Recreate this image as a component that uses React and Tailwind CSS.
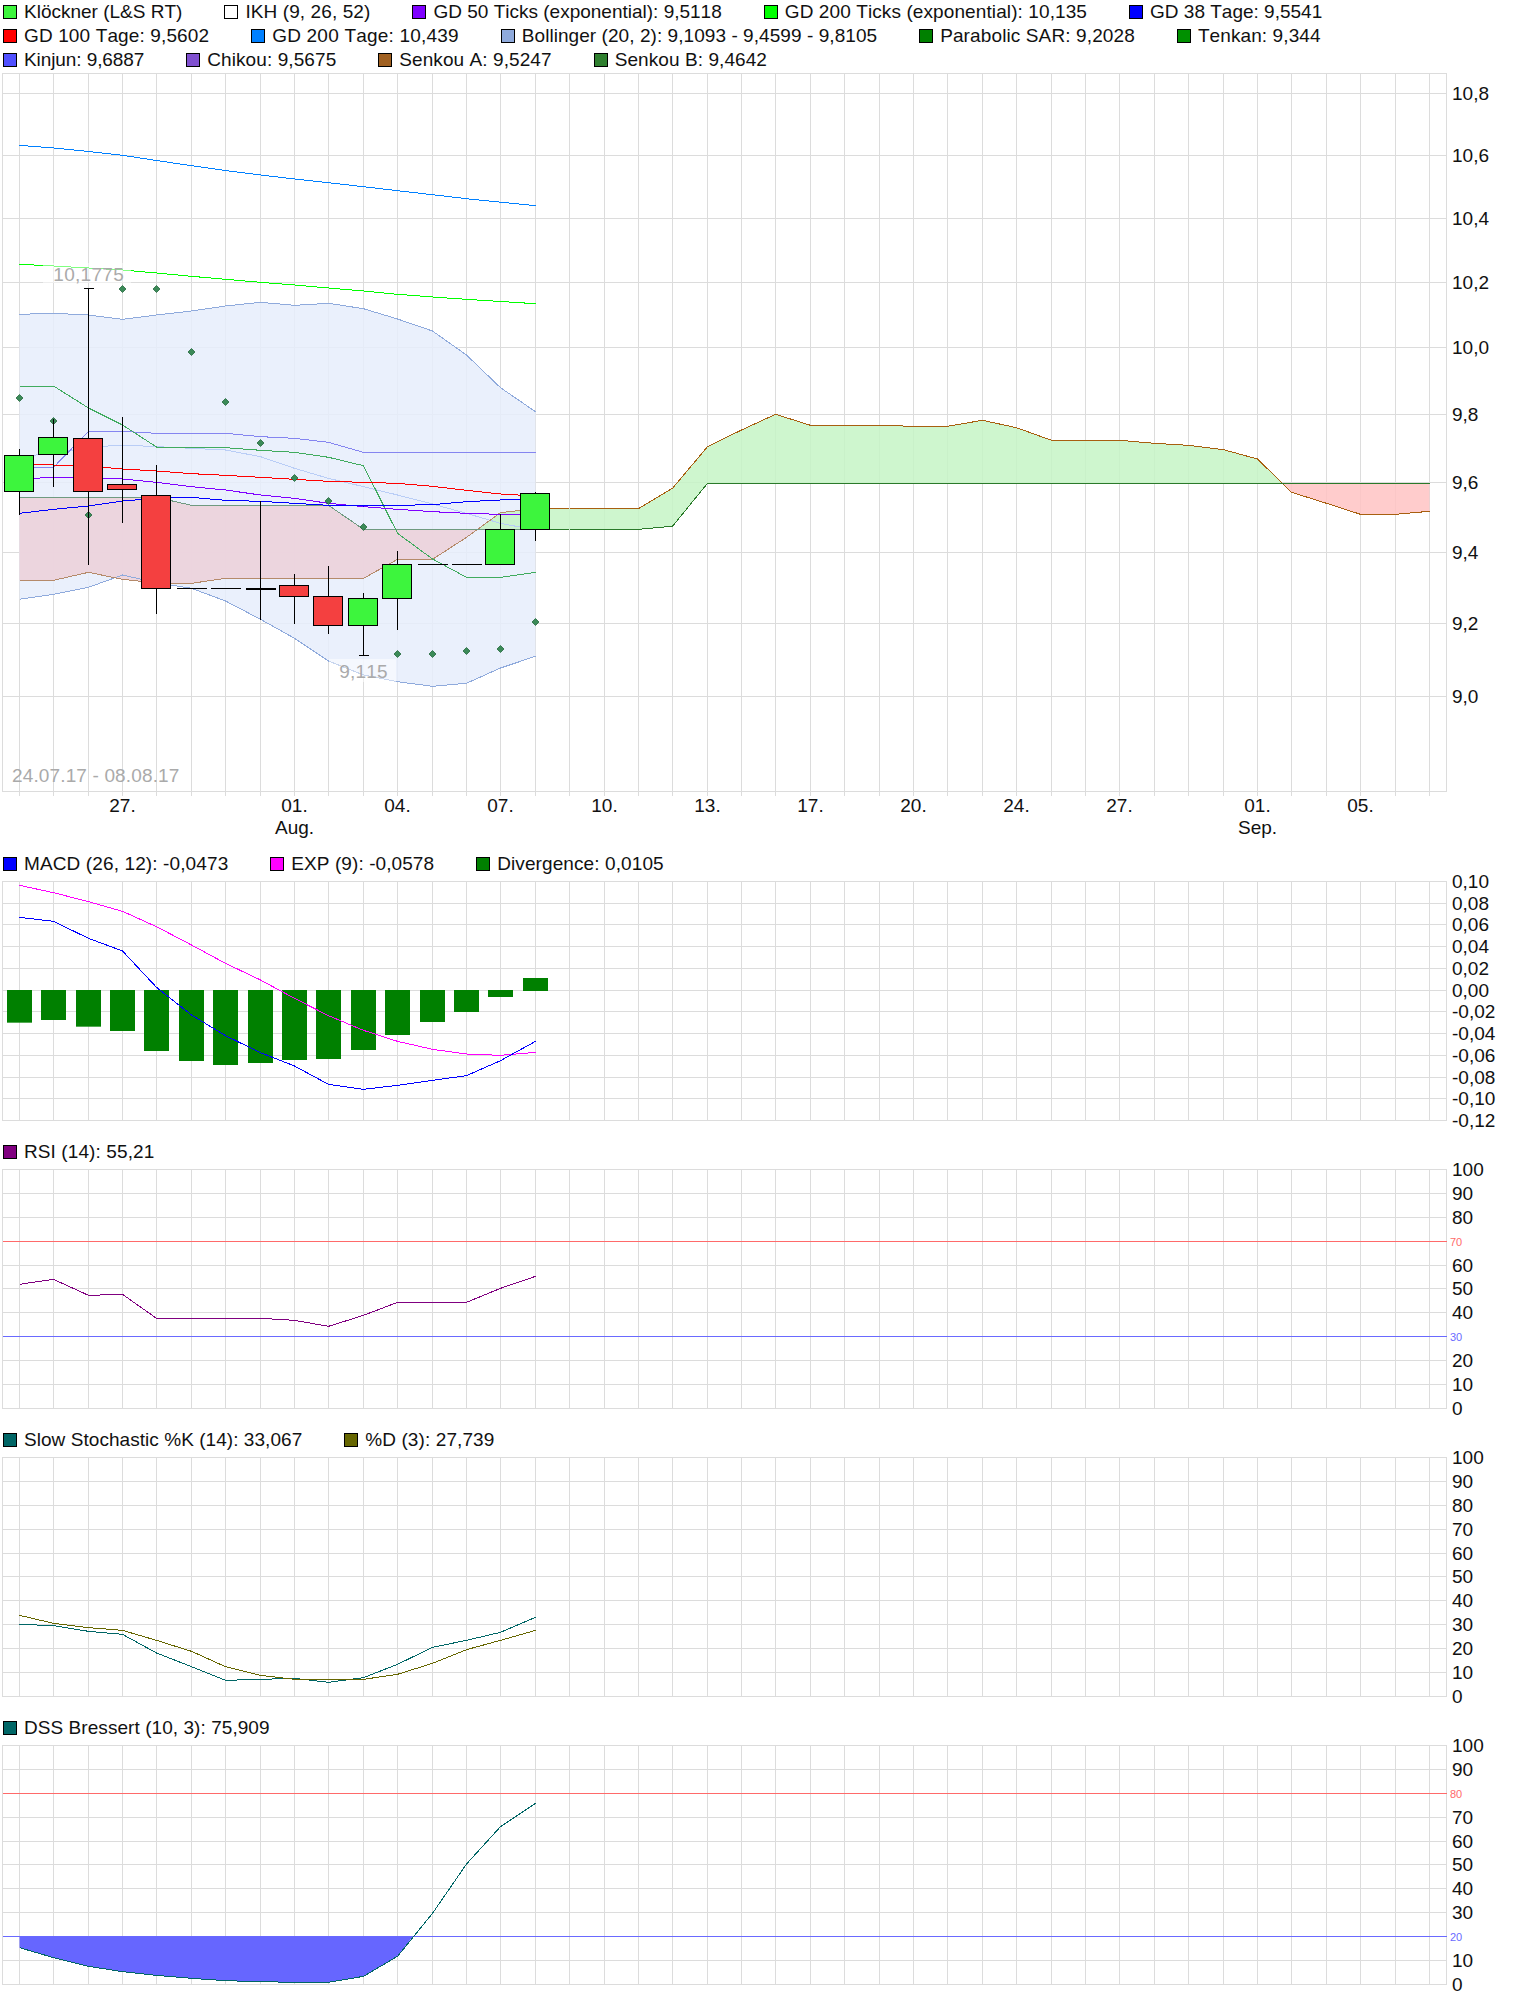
// Ichimoku / indicator chart page, values in page pixels
const LEGEND_TOP = [
  { c: '#3df53d', t: 'Klöckner (L&S RT)' },
  { c: '#ffffff', t: 'IKH (9, 26, 52)', track: 'tracking-[0.1px]' },
  { c: '#7f00ff', t: 'GD 50 Ticks (exponential): 9,5118' },
  { c: '#00ff00', t: 'GD 200 Ticks (exponential): 10,135', track: 'tracking-[0.1px]' },
  { c: '#0000ff', t: 'GD 38 Tage: 9,5541' },
  { c: '#ff0000', t: 'GD 100 Tage: 9,5602', track: 'tracking-[0.13px]' },
  { c: '#0080ff', t: 'GD 200 Tage: 10,439', track: 'tracking-[0.2px]' },
  { c: '#8faadc', t: 'Bollinger (20, 2): 9,1093 - 9,4599 - 9,8105', track: 'tracking-[0.06px]' },
  { c: '#008000', t: 'Parabolic SAR: 9,2028', track: 'tracking-[0.12px]' },
  { c: '#009000', t: 'Tenkan: 9,344', track: 'tracking-[0.1px]' },
  { c: '#5050ff', t: 'Kinjun: 9,6887', track: 'tracking-[-0.09px]' },
  { c: '#8050d0', t: 'Chikou: 9,5675', track: 'tracking-[0.09px]' },
  { c: '#a06020', t: 'Senkou A: 9,5247', track: 'tracking-[0.08px]' },
  { c: '#308030', t: 'Senkou B: 9,4642', track: 'tracking-[0.08px]' },
]

// ── Helpers ─────────────────────────────────────────────
const xAt = i => Math.floor(19.4 + i * 34.39) + 0.5
const X_LINES = Array.from({ length: 42 }, (_, i) => xAt(i))
const LEFT = 2.5
const RIGHT = 1446.5

const my = p => 400 + p / 3 // main chart, lower part
const pts = (ys, start = 0) => ys.map((y, i) => `${xAt(i + start)},${y}`).join(' ')
const area = (top, bottom, start = 0) =>
  [...top.map((y, i) => `${xAt(i + start)},${y}`), ...bottom.map((y, i) => `${xAt(i + start)},${y}`).reverse()].join(' ')

// ── Main chart data ─────────────────────────────────────
const GD200_TAGE = [145.3, 148, 151.5, 155.3, 160.5, 165.7, 170.5, 175, 179, 182.7, 186.7, 190.7, 194.7, 198.7, 202.2, 205.7]
const GD200_TICKS = [264.3, 266, 268, 270, 273, 276.3, 279.3, 282.3, 285, 288, 291, 294.3, 297, 299.3, 301.5, 303.7]
const BOLL_TOP = [314.3, 313.3, 315, 319.3, 315, 311, 306, 302.3, 305.3, 303.3, 308.7, 319, 331, 355, 387.7, 411.7]
const BOLL_BOTTOM = [599.3, 594.3, 587.3, 575, 582.7, 588.3, 601, 619.3, 638.3, 661, 675, 681.7, 686.3, 683.3, 668, 656.3]
const BOLL_MID = [170, 160, 142, 135, 140, 145, 150, 170, 205, 235, 260, 285, 312, 340, 370, 390].map(my)
const KINJUN = [202, 202, 94, 94, 100, 100, 100, 110, 115, 127, 157, 157, 157, 157, 157, 157].map(my)
const TENKAN = [386, 386, 408, 425, 447, 447, 447.7, 450.3, 452.3, 457.3, 465.7, 533.3, 559, 577.3, 577.3, 572.3]
const GD100 = [190, 195, 198, 207, 213, 221, 226, 232, 238, 244, 247, 250, 259, 271, 282, 288].map(my)
const GD50 = [237, 232, 232, 237, 247, 260, 270, 285, 295, 310, 320, 328, 335, 340, 343, 342].map(my)
const GD38 = [340, 328, 318, 303, 295, 292, 301, 304, 310, 316, 318, 316, 314, 305, 300, 297].map(my)

const SENKOU_A_L = [541, 541, 517, 538, 549, 550, 535, 535, 535, 535, 535, 478, 478, 412, 338, 326].map(my)
const SENKOU_B_L = [292, 292, 292, 292, 292, 316, 316, 316, 316, 316, 388, 388, 388, 388, 388, 388].map(my)
const SENKOU_A_R = [508.7, 508.7, 508.7, 488.3, 446.7, 430, 414.3, 425.3, 425.3, 425.3, 426.3, 426.3, 420.3, 427.7, 440.3, 440.3, 440.3, 443.3, 445.3, 449.7, 459, 492.3, 503.3, 514.3, 514.3, 511.3]
const SENKOU_B_R = [529.3, 529.3, 529.3, 526.3, 483.3, 483.3, 483.3, 483.3, 483.3, 483.3, 483.3, 483.3, 483.3, 483.3, 483.3, 483.3, 483.3, 483.3, 483.3, 483.3, 483.3, 483.3, 483.3, 483.3, 483.3, 483.3]

const CROSS1 = 477.7
const CROSS2 = 1283
const KUMO_PINK_L = [...SENKOU_B_L.slice(0, 14).map((y, i) => `${xAt(i)},${y}`), `${CROSS1},${my(388)}`, ...SENKOU_A_L.slice(0, 14).map((y, i) => `${xAt(i)},${y}`).reverse()].join(' ')
const KUMO_GREEN = [
  `${CROSS1},${my(388)}`,
  `${xAt(14)},${SENKOU_A_L[14]}`,
  `${xAt(15)},${SENKOU_A_L[15]}`,
  ...SENKOU_A_R.slice(0, 21).map((y, i) => `${xAt(i + 16)},${y}`),
  `${CROSS2},483.3`,
  ...SENKOU_B_R.slice(0, 21).map((y, i) => `${xAt(i + 16)},${y}`).reverse(),
  `${xAt(15)},${my(388)}`,
].join(' ')
const KUMO_PINK_R = [`${CROSS2},483.3`, ...SENKOU_A_R.slice(21).map((y, i) => `${xAt(i + 37)},${y}`), `${xAt(41)},483.3`].join(' ')

const CANDLES = [
  { i: 0, up: true, top: 166, bot: 274, hi: 148, lo: 346 },
  { i: 1, up: true, top: 112, bot: 163, hi: 57, lo: 260 },
  { i: 2, up: false, top: 115, bot: 274, hi: -335, lo: 495, capHi: true },
  { i: 3, up: false, top: 253, bot: 269, hi: 52, lo: 368 },
  { i: 4, up: false, top: 286, bot: 565, hi: 195, lo: 641 },
  { i: 5, doji: 565 },
  { i: 6, doji: 565 },
  { i: 7, doji: 564, hi: 304, lo: 659, thick: true },
  { i: 8, up: false, top: 556, bot: 589, hi: 522, lo: 671 },
  { i: 9, up: false, top: 589, bot: 676, hi: 498, lo: 701 },
  { i: 10, up: true, top: 595, bot: 676, hi: 580, lo: 766, capLo: true },
  { i: 11, up: true, top: 493, bot: 595, hi: 453, lo: 689 },
  { i: 12, doji: 493 },
  { i: 13, doji: 493 },
  { i: 14, up: true, top: 388, bot: 493, hi: 343, lo: 388 },
  { i: 15, up: true, top: 280, bot: 388, hi: 277, lo: 422 },
]

const SAR = [398, 421, 515, 289, 289, 352, 402, 443, 478, 501, 527, 654, 654, 651, 649, 622]

const X_LABELS = [
  { i: 3, t: '27.' }, { i: 8, t: '01.', sub: 'Aug.' }, { i: 11, t: '04.' }, { i: 14, t: '07.' },
  { i: 17, t: '10.' }, { i: 20, t: '13.' }, { i: 23, t: '17.' }, { i: 26, t: '20.' },
  { i: 29, t: '24.' }, { i: 32, t: '27.' }, { i: 36, t: '01.', sub: 'Sep.' }, { i: 39, t: '05.' },
]

const MAIN_Y = [
  [93, '10,8'], [155, '10,6'], [218, '10,4'], [282, '10,2'], [347, '10,0'], [414, '9,8'],
  [482, '9,6'], [552, '9,4'], [623, '9,2'], [696, '9,0'],
]

// ── Sub panels ──────────────────────────────────────────
const MACD_Y = [
  [881, '0,10'], [903, '0,08'], [924, '0,06'], [946, '0,04'], [968, '0,02'], [990, '0,00'],
  [1011, '-0,02'], [1033, '-0,04'], [1055, '-0,06'], [1077, '-0,08'], [1098, '-0,10'], [1120, '-0,12'],
]
const tens = (rows) => rows.map((y, i) => [y, String(100 - i * 10)])
const RSI_Y = tens([1169, 1193, 1217, 1241, 1265, 1288, 1312, 1336, 1360, 1384, 1408])
const STOCH_Y = tens([1457, 1481, 1505, 1529, 1553, 1576, 1600, 1624, 1648, 1672, 1696])
const DSS_Y = tens([1745, 1769, 1793, 1817, 1841, 1864, 1888, 1912, 1936, 1960, 1984])

const sy = (base, ps) => ps.map(p => base + p / 3)
const MACD_BARS = [518, 510, 530, 543, 603, 633, 645, 639, 630, 627, 600, 555, 516, 486, 441]
const MACD_LINE = sy(850, [202, 214, 265, 303, 412, 495, 557, 608, 648, 703, 718, 706, 691, 677, 632, 574])
const EXP_LINE = sy(850, [106, 128, 155, 184, 230, 285, 340, 390, 445, 497, 541, 574, 598, 612, 616, 607])
const RSI_LINE = sy(1140, [433, 418, 466, 463, 535, 535, 535, 535, 541, 559, 526, 487, 487, 487, 445, 409])
const STOCH_K = sy(1430, [583, 587, 604, 613, 669, 710, 751, 748, 745, 757, 743, 703, 652, 631, 607, 562])
const STOCH_D = sy(1430, [556, 580, 593, 601, 631, 664, 710, 736, 748, 748, 748, 733, 700, 659, 631, 601])
const DSS_LINE = sy(1715, [698, 728, 754, 770, 781, 790, 797, 800, 802, 802, 784, 724, 595, 447, 335, 265])
const DSS_FILL = [
  `${xAt(0)},1936.5`,
  ...DSS_LINE.slice(0, 12).map((y, i) => `${xAt(i)},${y}`),
  `413,1936.5`,
].join(' ')

// ── Pieces ──────────────────────────────────────────────
function Legend({ items, className = '' }) {
  return (
    <div className={`flex flex-wrap w-[1447px] pl-[3px] gap-x-[42px] text-[19px] leading-[24px] text-[#111] ${className}`}>
      {items.map(it => (
        <div key={it.t} className="flex items-center gap-[7px] h-[24px] whitespace-nowrap">
          <span className="w-[14px] h-[14px] border border-black" style={{ backgroundColor: it.c }} />
          <span className={it.track}>{it.t}</span>
        </div>
      ))}
    </div>
  )
}

function Grid({ top, bottom, rows, ticks }) {
  return (
    <g stroke="#dcdcdc" strokeWidth="1" shapeRendering="crispEdges">
      {X_LINES.map(x => <line key={x} x1={x} x2={x} y1={top} y2={ticks ? bottom + 4 : bottom} />)}
      {rows.map(([y]) => <line key={y} x1={LEFT} x2={RIGHT} y1={y + 0.5} y2={y + 0.5} />)}
      <rect x={LEFT} y={top} width={RIGHT - LEFT} height={bottom - top} fill="none" />
    </g>
  )
}

function AxisLabels({ rows, hidden = [] }) {
  return (
    <g className="text-[19px] fill-[#111]">
      {rows.filter(([, t]) => !hidden.includes(t)).map(([y, t]) => (
        <text key={t} x={1452} y={y + 7}>{t}</text>
      ))}
    </g>
  )
}

function Level({ y, color, label }) {
  return (
    <g>
      <line x1={LEFT} x2={RIGHT} y1={y + 0.5} y2={y + 0.5} stroke={color} shapeRendering="crispEdges" />
      <text x={1450} y={y + 4.5} fill={color} className="text-[11px]">{label}</text>
    </g>
  )
}

function Line({ points, color }) {
  return <polyline points={points} fill="none" stroke={color} strokeWidth="1" shapeRendering="crispEdges" />
}

function Candle({ c }) {
  const x = xAt(c.i)
  if (c.doji) {
    const y = Math.floor(my(c.doji)) + 0.5
    return (
      <g stroke="black" shapeRendering="crispEdges">
        {c.hi != null && <line x1={x} x2={x} y1={my(c.hi)} y2={my(c.lo)} />}
        <line x1={x - 15} x2={x + 15} y1={y} y2={y} strokeWidth={c.thick ? 2 : 1} />
      </g>
    )
  }
  const top = Math.floor(my(c.top)) + 0.5
  const bot = Math.floor(my(c.bot)) + 0.5
  return (
    <g stroke="black" shapeRendering="crispEdges">
      <line x1={x} x2={x} y1={my(c.hi)} y2={my(c.lo)} />
      {c.capHi && <line x1={x - 5} x2={x + 5} y1={my(c.hi)} y2={my(c.hi)} />}
      {c.capLo && <line x1={x - 5} x2={x + 5} y1={my(c.lo)} y2={my(c.lo)} />}
      <rect x={x - 15} y={top} width={29} height={bot - top} fill={c.up ? '#3df53d' : '#f44040'} />
    </g>
  )
}

function Diamond({ x, y }) {
  return (
    <polygon
      points={`${x},${y - 3.5} ${x + 3.5},${y} ${x},${y + 3.5} ${x - 3.5},${y}`}
      fill="#3b8a58"
      stroke="#145c2e"
      strokeWidth="0.7"
    />
  )
}

function MainChart() {
  return (
    <svg className="block overflow-visible" width="1520" height="780" viewBox="0 72 1520 780">
      <Grid top={73.5} bottom={791.5} rows={MAIN_Y} ticks />
      <polygon points={area(BOLL_TOP, BOLL_BOTTOM)} fill="#e6edfb" fillOpacity="0.85" />
      <polygon points={KUMO_PINK_L} fill="#ecd1da" fillOpacity="0.9" />
      <polygon points={KUMO_GREEN} fill="#c6f4c6" fillOpacity="0.85" />
      <polygon points={KUMO_PINK_R} fill="#ffc3c3" fillOpacity="0.85" />

      <Line points={pts(BOLL_TOP)} color="#8faadc" />
      <Line points={pts(BOLL_BOTTOM)} color="#8faadc" />
      <Line points={pts(BOLL_MID)} color="#b9cdf6" />
      <Line points={pts(SENKOU_A_L)} color="#b58a6a" />
      <Line points={pts(SENKOU_B_L)} color="#6f9a80" />
      <Line points={pts(SENKOU_A_R, 16)} color="#a85f10" />
      <Line points={pts(SENKOU_B_R, 16)} color="#2a7a2a" />
      <Line points={`${xAt(15)},${SENKOU_A_L[15]} ${xAt(16)},${SENKOU_A_R[0]}`} color="#a85f10" />
      <Line points={`${xAt(15)},${my(388)} ${xAt(16)},${SENKOU_B_R[0]}`} color="#2a7a2a" />
      <Line points={pts(KINJUN)} color="#8585f0" />
      <Line points={pts(TENKAN)} color="#40ab5e" />
      <Line points={pts(GD200_TAGE)} color="#0080ff" />
      <Line points={pts(GD200_TICKS)} color="#00ff00" />
      <Line points={pts(GD100)} color="#ff0000" />
      <Line points={pts(GD50)} color="#7f00ff" />
      <Line points={pts(GD38)} color="#0000ff" />

      {SAR.map((y, i) => <Diamond key={i} x={xAt(i)} y={y} />)}
      {CANDLES.map(c => <Candle key={c.i} c={c} />)}

      <rect x={43} y={263} width={88} height={20} fill="white" fillOpacity="0.5" />
      <text x={88.7} y={281} textAnchor="middle" fill="#aaaaaa" className="text-[19px] tracking-[0.3px]">10,1775</text>
      <rect x={329} y={659} width={67} height={23} fill="white" fillOpacity="0.5" />
      <text x={363.5} y={678} textAnchor="middle" fill="#aaaaaa" className="text-[19px] tracking-[0.2px]">9,115</text>
      <text x={12} y={781.5} fill="#aaaaaa" className="text-[19px] tracking-[0.14px]">24.07.17 - 08.08.17</text>

      <AxisLabels rows={MAIN_Y} />
      <g className="text-[19px] fill-[#111]">
        {X_LABELS.map(l => (
          <g key={l.t + l.i}>
            <text x={xAt(l.i)} y={812} textAnchor="middle">{l.t}</text>
            {l.sub && <text x={xAt(l.i)} y={834} textAnchor="middle">{l.sub}</text>}
          </g>
        ))}
      </g>
    </svg>
  )
}

function Panel({ top, rows, children }) {
  return (
    <svg className="block overflow-visible" width="1520" height="264" viewBox={`0 ${top} 1520 264`}>
      <Grid top={rows[0][0] + 0.5} bottom={rows[rows.length - 1][0] + 0.5} rows={rows} />
      {children}
    </svg>
  )
}

export default function App() {
  return (
    <div className="w-[1520px] h-[2005px] bg-white overflow-hidden [font-kerning:none] font-['Liberation_Sans',Arial,sans-serif]">
      <Legend items={LEGEND_TOP} />
      <MainChart />

      <Legend items={[
        { c: '#0000ff', t: 'MACD (26, 12): -0,0473', track: 'tracking-[0.12px]' },
        { c: '#ff00ff', t: 'EXP (9): -0,0578', track: 'tracking-[0.08px]' },
        { c: '#008000', t: 'Divergence: 0,0105', track: 'tracking-[0.1px]' },
      ]} />
      <Panel top={876} rows={MACD_Y}>
        {MACD_BARS.map((b, i) => (
          <rect key={i} x={xAt(i) - 12.5} y={990} width={25} height={b / 3 + 850 - 990} fill="#008000" />
        ))}
        <rect x={xAt(15) - 12.5} y={978} width={25} height={13} fill="#008000" />
        <Line points={pts(EXP_LINE)} color="#ff00ff" />
        <Line points={pts(MACD_LINE)} color="#0000ff" />
        <AxisLabels rows={MACD_Y} />
      </Panel>

      <Legend items={[{ c: '#800080', t: 'RSI (14): 55,21', track: 'tracking-[0.1px]' }]} />
      <Panel top={1164} rows={RSI_Y}>
        <Level y={1241} color="#ff6a6a" label="70" />
        <Level y={1336} color="#6a6aff" label="30" />
        <Line points={pts(RSI_LINE)} color="#800080" />
        <AxisLabels rows={RSI_Y} hidden={['70', '30']} />
      </Panel>

      <Legend items={[
        { c: '#006666', t: 'Slow Stochastic %K (14): 33,067', track: 'tracking-[0.05px]' },
        { c: '#666600', t: '%D (3): 27,739', track: 'tracking-[0.1px]' },
      ]} />
      <Panel top={1452} rows={STOCH_Y}>
        <Line points={pts(STOCH_K)} color="#006666" />
        <Line points={pts(STOCH_D)} color="#666600" />
        <AxisLabels rows={STOCH_Y} />
      </Panel>

      <Legend items={[{ c: '#006666', t: 'DSS Bressert (10, 3): 75,909', track: 'tracking-[0.06px]' }]} />
      <Panel top={1740} rows={DSS_Y}>
        <Level y={1793} color="#ff6a6a" label="80" />
        <Level y={1936} color="#6a6aff" label="20" />
        <polygon points={DSS_FILL} fill="#6666ff" />
        <Line points={pts(DSS_LINE)} color="#006666" />
        <AxisLabels rows={DSS_Y} hidden={['80', '20']} />
      </Panel>
    </div>
  )
}
